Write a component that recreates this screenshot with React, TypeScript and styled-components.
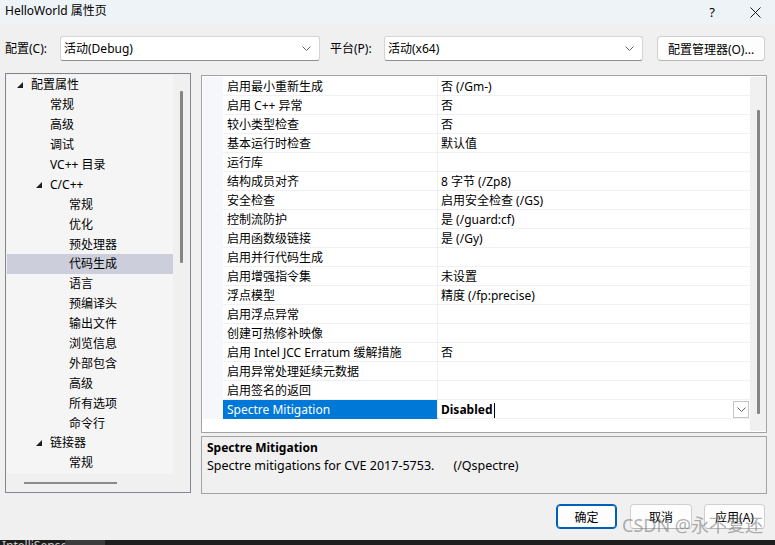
import React from 'react'
import styled, { createGlobalStyle } from 'styled-components'

const GlobalStyle = createGlobalStyle`
  html, body {
    margin: 0;
    padding: 0;
    background: #f0f0f0;
  }
  body {
    font-family: "Noto Sans", "Noto Sans CJK SC", sans-serif;
    font-size: 12px;
    color: #000;
  }
`

type TreeItem = { label: string; level: number; expander?: boolean; selected?: boolean }

const treeItems: TreeItem[] = [
  { label: '配置属性', level: 0, expander: true },
  { label: '常规', level: 1 },
  { label: '高级', level: 1 },
  { label: '调试', level: 1 },
  { label: 'VC++ 目录', level: 1 },
  { label: 'C/C++', level: 1, expander: true },
  { label: '常规', level: 2 },
  { label: '优化', level: 2 },
  { label: '预处理器', level: 2 },
  { label: '代码生成', level: 2, selected: true },
  { label: '语言', level: 2 },
  { label: '预编译头', level: 2 },
  { label: '输出文件', level: 2 },
  { label: '浏览信息', level: 2 },
  { label: '外部包含', level: 2 },
  { label: '高级', level: 2 },
  { label: '所有选项', level: 2 },
  { label: '命令行', level: 2 },
  { label: '链接器', level: 1, expander: true },
  { label: '常规', level: 2 },
]

const properties: [string, string][] = [
  ['启用最小重新生成', '否 (/Gm-)'],
  ['启用 C++ 异常', '否'],
  ['较小类型检查', '否'],
  ['基本运行时检查', '默认值'],
  ['运行库', ''],
  ['结构成员对齐', '8 字节 (/Zp8)'],
  ['安全检查', '启用安全检查 (/GS)'],
  ['控制流防护', '是 (/guard:cf)'],
  ['启用函数级链接', '是 (/Gy)'],
  ['启用并行代码生成', ''],
  ['启用增强指令集', '未设置'],
  ['浮点模型', '精度 (/fp:precise)'],
  ['启用浮点异常', ''],
  ['创建可热修补映像', ''],
  ['启用 Intel JCC Erratum 缓解措施', '否'],
  ['启用异常处理延续元数据', ''],
  ['启用签名的返回', ''],
]

const Dialog = styled.div`
  position: relative;
  width: 775px;
  height: 545px;
  display: flex;
  flex-direction: column;
  background: #f0f0f0;
  overflow: hidden;
`

const TitleBar = styled.div`
  flex: none;
  height: 24px;
  display: flex;
  align-items: center;
  padding-left: 5px;
  background: #eef3f8;
`

const Title = styled.div`
  flex: 1;
  line-height: 16px;
  margin-top: -2px;
`

const CaptionButton = styled.div<{ $w: number }>`
  width: ${(p) => p.$w}px;
  height: 24px;
  display: flex;
  align-items: center;
  justify-content: center;
  font-size: 13px;
`

const Toolbar = styled.div`
  flex: none;
  height: 25px;
  margin-top: 12px;
  display: flex;
  align-items: center;
  padding-left: 5px;
`

const FieldLabel = styled.div<{ $w: number; $gap?: number }>`
  width: ${(p) => p.$w}px;
  margin-left: ${(p) => p.$gap || 0}px;
  line-height: 16px;
  padding-top: 1px;
`

const Combo = styled.div<{ $w: number }>`
  box-sizing: border-box;
  width: ${(p) => p.$w}px;
  height: 25px;
  display: flex;
  align-items: center;
  padding: 0 8px 0 3px;
  background: #fff;
  border: 1px solid #d4d4d4;
  border-bottom-color: #8e8e8e;
  border-radius: 3px;
`

const ComboText = styled.div`
  flex: 1;
  line-height: 16px;
  padding-top: 1px;
`

const PushButton = styled.button<{ $w: number; $default?: boolean; $gap?: number }>`
  box-sizing: border-box;
  width: ${(p) => p.$w}px;
  height: 25px;
  margin-left: ${(p) => p.$gap || 0}px;
  padding: 1px 0 0;
  font: inherit;
  color: #000;
  background: #fdfdfd;
  border: 1px solid ${(p) => (p.$default ? '#005fb8' : '#d0d0d0')};
  box-shadow: ${(p) => (p.$default ? 'inset 0 0 0 1px #005fb8' : 'none')};
  border-bottom-color: ${(p) => (p.$default ? '#005fb8' : '#b8b8b8')};
  border-radius: 4px;
`

const Body = styled.div`
  flex: none;
  height: 421px;
  margin-top: 12px;
  display: flex;
  padding-left: 5px;
`

const TreePanel = styled.div`
  box-sizing: border-box;
  width: 186px;
  height: 420px;
  border: 1px solid #82878f;
  display: grid;
  grid-template-columns: 166px 1fr;
  grid-template-rows: 1fr 18px;
  padding: 1px 0 0 1px;
  background: #f0f0f0;
`

const TreeView = styled.div`
  background: #f5f5f5;
  overflow: hidden;
`

const TreeRow = styled.div<{ $level: number; $selected?: boolean }>`
  box-sizing: border-box;
  height: 19.9px;
  display: flex;
  align-items: center;
  padding: 1px 0 0 ${(p) => 8 + p.$level * 19}px;
  background: ${(p) => (p.$selected ? '#cccedb' : 'transparent')};
  line-height: 16px;
  white-space: nowrap;
`

const Expander = styled.span`
  box-sizing: border-box;
  width: 16px;
  height: 10px;
  display: flex;
  align-items: center;
  padding-left: 2px;
`

const ExpanderGap = styled.span`
  width: 16px;
`

const VScroll = styled.div<{ $top: number; $len: number }>`
  position: relative;
  background: #f0f0f0;
  &::after {
    content: '';
    position: absolute;
    left: 7px;
    top: ${(p) => p.$top}px;
    width: 3px;
    height: ${(p) => p.$len}px;
    background: #858585;
    border-radius: 1px;
  }
`

const HScroll = styled.div`
  grid-column: 1 / 3;
  display: flex;
  align-items: center;
  padding-left: 17px;
`

const HThumb = styled.div`
  width: 93px;
  height: 2px;
  background: #8a8a8a;
`

const RightColumn = styled.div`
  margin-left: 10px;
  margin-top: 2px;
  width: 566px;
  display: flex;
  flex-direction: column;
`

const GridPanel = styled.div`
  box-sizing: border-box;
  height: 358px;
  border: 1px solid #a3a3a3;
  padding: 1px 0 1px 1px;
  background: #fff;
  display: flex;
`

const GridRows = styled.div`
  flex: 1;
  display: flex;
  flex-direction: column;
`

const GridRow = styled.div`
  height: 19px;
  display: flex;
`

const Margin = styled.div`
  width: 20px;
  background: #f5f7fb;
`

const NameCell = styled.div<{ $selected?: boolean }>`
  box-sizing: border-box;
  width: 215px;
  padding: 2px 0 0 4px;
  display: flex;
  align-items: center;
  line-height: 16px;
  white-space: nowrap;
  border-right: 1px solid #f0f0f4;
  border-bottom: 1px solid ${(p) => (p.$selected ? '#0078d7' : '#f0f0f4')};
  background: ${(p) => (p.$selected ? '#0078d7' : '#fff')};
  color: ${(p) => (p.$selected ? '#fff' : '#000')};
`

const ValueCell = styled.div<{ $bold?: boolean }>`
  box-sizing: border-box;
  flex: 1;
  padding: 2px 0 0 3px;
  display: flex;
  align-items: center;
  line-height: 16px;
  white-space: nowrap;
  border-bottom: 1px solid #f0f0f4;
  font-weight: ${(p) => (p.$bold ? 700 : 400)};
`

const Caret = styled.span`
  width: 1px;
  height: 15px;
  margin-left: 1px;
  background: #000;
`

const DropButton = styled.div`
  box-sizing: border-box;
  width: 16px;
  height: 17px;
  margin: -2px 1px 0 auto;
  border: 1px solid #c4c4c4;
  display: flex;
  align-items: center;
  justify-content: center;
`

const GridScroll = styled(VScroll)`
  flex: none;
  width: 16px;
`

const Description = styled.div`
  box-sizing: border-box;
  height: 58px;
  margin-top: 3px;
  border: 1px solid #a3a3a3;
  padding: 2px 5px;
  line-height: 18px;
`

const DescTitle = styled.div`
  font-weight: 700;
`

const DescText = styled.div`
  font-size: 12.5px;
`

const Switch = styled.span`
  margin-left: 19px;
`

const Footer = styled.div`
  flex: none;
  height: 25px;
  margin-top: 10px;
  display: flex;
  justify-content: flex-end;
  padding-right: 10px;
`

const StatusStrip = styled.div`
  margin-top: auto;
  height: 5px;
  flex: none;
  display: flex;
  background: #1e1e1e;
  overflow: hidden;
`

const StatusText = styled.div`
  width: 63px;
  color: #c8c8c8;
  font-size: 12px;
  line-height: 12px;
  padding-left: 2px;
`

const StatusBox = styled.div`
  width: 40px;
  background: #3c3c3c;
`

const Watermark = styled.div`
  position: absolute;
  left: 622px;
  top: 513px;
  font-size: 18px;
  line-height: 24px;
  color: rgba(110, 110, 110, 0.55);
  white-space: nowrap;
  pointer-events: none;
`

const Chevron = () => (
  <svg width="9" height="5" viewBox="0 0 9 5">
    <path d="M0.5 0.5 L4.5 4.5 L8.5 0.5" fill="none" stroke="#606060" strokeWidth="1" />
  </svg>
)

const Triangle = () => (
  <svg width="6" height="6" viewBox="0 0 6 6">
    <polygon points="6,0 6,6 0,6" fill="#1e1e1e" />
  </svg>
)

const CloseGlyph = () => (
  <svg width="11" height="11" viewBox="0 0 11 11">
    <path d="M0.5 0.5 L10.5 10.5 M10.5 0.5 L0.5 10.5" stroke="#1a1a1a" strokeWidth="1" />
  </svg>
)

export default function App() {
  return (
    <Dialog>
      <GlobalStyle />
      <TitleBar>
        <Title>HelloWorld 属性页</Title>
        <CaptionButton $w={46}>?</CaptionButton>
        <CaptionButton $w={40}>
          <CloseGlyph />
        </CaptionButton>
      </TitleBar>

      <Toolbar>
        <FieldLabel $w={55}>配置(C):</FieldLabel>
        <Combo $w={260}>
          <ComboText>活动(Debug)</ComboText>
          <Chevron />
        </Combo>
        <FieldLabel $w={54} $gap={10}>平台(P):</FieldLabel>
        <Combo $w={259}>
          <ComboText>活动(x64)</ComboText>
          <Chevron />
        </Combo>
        <PushButton $w={108} $gap={14}>配置管理器(O)...</PushButton>
      </Toolbar>

      <Body>
        <TreePanel>
          <TreeView>
            {treeItems.map((item, i) => (
              <TreeRow key={i} $level={item.level} $selected={item.selected}>
                {item.expander ? (
                  <Expander>
                    <Triangle />
                  </Expander>
                ) : (
                  <ExpanderGap />
                )}
                {item.label}
              </TreeRow>
            ))}
          </TreeView>
          <VScroll $top={16} $len={172} />
          <HScroll>
            <HThumb />
          </HScroll>
        </TreePanel>

        <RightColumn>
          <GridPanel>
            <GridRows>
              {properties.map(([name, value], i) => (
                <GridRow key={i}>
                  <Margin />
                  <NameCell>{name}</NameCell>
                  <ValueCell>{value}</ValueCell>
                </GridRow>
              ))}
              <GridRow>
                <Margin />
                <NameCell $selected>Spectre Mitigation</NameCell>
                <ValueCell $bold>
                  Disabled
                  <Caret />
                  <DropButton>
                    <Chevron />
                  </DropButton>
                </ValueCell>
              </GridRow>
            </GridRows>
            <GridScroll $top={33} $len={304} />
          </GridPanel>

          <Description>
            <DescTitle>Spectre Mitigation</DescTitle>
            <DescText>
              Spectre mitigations for CVE 2017-5753.<Switch>(/Qspectre)</Switch>
            </DescText>
          </Description>
        </RightColumn>
      </Body>

      <Footer>
        <PushButton $w={61} $default>确定</PushButton>
        <PushButton $w={62} $gap={13}>取消</PushButton>
        <PushButton $w={61} $gap={12}>应用(A)</PushButton>
      </Footer>

      <StatusStrip>
        <StatusText>IntelliSense</StatusText>
        <StatusBox />
      </StatusStrip>

      <Watermark>CSDN @永不复还</Watermark>
    </Dialog>
  )
}
